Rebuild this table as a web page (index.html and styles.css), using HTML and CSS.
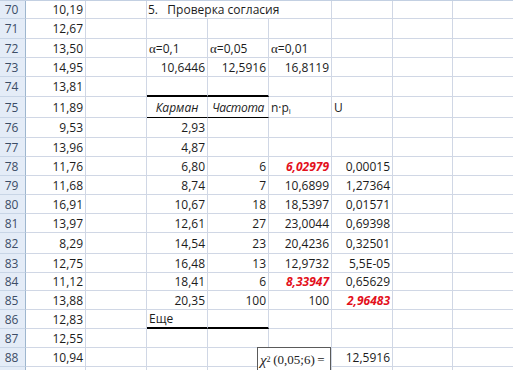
FILE: index.html
```html
<!DOCTYPE html>
<html>
<head>
<meta charset="utf-8">
<link rel="stylesheet" href="styles.css">
</head>
<body>
<div class="sheet">
  <div class="rh">70</div><div class="c r">10,19</div><div class="c"></div><div class="c span3 title">5.   Проверка согласия</div><div class="c"></div><div class="c"></div><div class="c"></div>
  <div class="rh">71</div><div class="c r">12,67</div><div class="c"></div><div class="c"></div><div class="c"></div><div class="c"></div><div class="c"></div><div class="c"></div><div class="c"></div>
  <div class="rh">72</div><div class="c r">13,50</div><div class="c"></div><div class="c"><span><span class="alpha">α</span>=0,1</span></div><div class="c"><span><span class="alpha">α</span>=0,05</span></div><div class="c"><span><span class="alpha">α</span>=0,01</span></div><div class="c"></div><div class="c"></div><div class="c"></div>
  <div class="rh">73</div><div class="c r">14,95</div><div class="c"></div><div class="c r">10,6446</div><div class="c r">12,5916</div><div class="c r">16,8119</div><div class="c"></div><div class="c"></div><div class="c"></div>
  <div class="rh">74</div><div class="c r">13,81</div><div class="c"></div><div class="c tb"></div><div class="c tb"></div><div class="c"></div><div class="c"></div><div class="c"></div><div class="c"></div>
  <div class="rh">75</div><div class="c r">11,89</div><div class="c"></div><div class="c ctr it hb">Карман</div><div class="c ctr it hb narrow">Частота</div><div class="c"><span>n·p<sub>i</sub></span></div><div class="c">U</div><div class="c"></div><div class="c"></div>
  <div class="rh">76</div><div class="c r">9,53</div><div class="c"></div><div class="c r">2,93</div><div class="c"></div><div class="c"></div><div class="c"></div><div class="c"></div><div class="c"></div>
  <div class="rh">77</div><div class="c r">13,96</div><div class="c"></div><div class="c r">4,87</div><div class="c"></div><div class="c"></div><div class="c"></div><div class="c"></div><div class="c"></div>
  <div class="rh">78</div><div class="c r">11,76</div><div class="c"></div><div class="c r">6,80</div><div class="c r">6</div><div class="c r red">6,02979</div><div class="c r">0,00015</div><div class="c"></div><div class="c"></div>
  <div class="rh">79</div><div class="c r">11,68</div><div class="c"></div><div class="c r">8,74</div><div class="c r">7</div><div class="c r">10,6899</div><div class="c r">1,27364</div><div class="c"></div><div class="c"></div>
  <div class="rh">80</div><div class="c r">16,91</div><div class="c"></div><div class="c r">10,67</div><div class="c r">18</div><div class="c r">18,5397</div><div class="c r">0,01571</div><div class="c"></div><div class="c"></div>
  <div class="rh">81</div><div class="c r">13,97</div><div class="c"></div><div class="c r">12,61</div><div class="c r">27</div><div class="c r">23,0044</div><div class="c r">0,69398</div><div class="c"></div><div class="c"></div>
  <div class="rh">82</div><div class="c r">8,29</div><div class="c"></div><div class="c r">14,54</div><div class="c r">23</div><div class="c r">20,4236</div><div class="c r">0,32501</div><div class="c"></div><div class="c"></div>
  <div class="rh">83</div><div class="c r">12,75</div><div class="c"></div><div class="c r">16,48</div><div class="c r">13</div><div class="c r">12,9732</div><div class="c r">5,5E-05</div><div class="c"></div><div class="c"></div>
  <div class="rh">84</div><div class="c r">11,12</div><div class="c"></div><div class="c r">18,41</div><div class="c r">6</div><div class="c r red">8,33947</div><div class="c r">0,65629</div><div class="c"></div><div class="c"></div>
  <div class="rh">85</div><div class="c r">13,88</div><div class="c"></div><div class="c r">20,35</div><div class="c r">100</div><div class="c r">100</div><div class="c r red">2,96483</div><div class="c"></div><div class="c"></div>
  <div class="rh">86</div><div class="c r">12,83</div><div class="c"></div><div class="c tb">Еще</div><div class="c tb"></div><div class="c"></div><div class="c"></div><div class="c"></div><div class="c"></div>
  <div class="rh">87</div><div class="c r">12,55</div><div class="c"></div><div class="c"></div><div class="c"></div><div class="c"></div><div class="c"></div><div class="c"></div><div class="c"></div>
  <div class="rh">88</div><div class="c r">10,94</div><div class="c"></div><div class="c"></div><div class="c"></div><div class="c"></div><div class="c r">12,5916</div><div class="c"></div><div class="c"></div>
  <div class="rh"></div><div class="c"></div><div class="c"></div><div class="c"></div><div class="c"></div><div class="c"></div><div class="c"></div><div class="c"></div><div class="c"></div>
  <div class="eq"><span class="chi">χ</span><sup>2</sup>&thinsp;(0,05;6)&thinsp;=</div>
</div>
</body>
</html>
```
FILE: styles.css
```css
html, body {
  margin: 0;
  padding: 0;
  background: #ffffff;
  overflow: hidden;
}
.sheet {
  position: relative;
  display: grid;
  grid-template-columns: 26px 60px 61px 61px 61px 63px 61px 60px 61px;
  grid-template-rows: 18px 20px 19px 19px 20px 21px 20px 19px 19px 19px 19px 19px 21px 19px 18px 19px 19px 19px 19px 19px;
  border-top: 1px solid #c3d0e2;
  width: 514px;
  font-family: "Open Sans", "Noto Sans", sans-serif;
  font-size: 12px;
  color: #1c1c1c;
}
.rh {
  box-sizing: border-box;
  background: #e4ecf7;
  border-right: 1px solid #9eb6ce;
  border-bottom: 1px solid #c8d5e6;
  color: #3c4d66;
  display: flex;
  align-items: center;
  justify-content: center;
  padding-right: 2px;
}
.c {
  box-sizing: border-box;
  border-right: 1px solid #d0d7e5;
  border-bottom: 1px solid #d0d7e5;
  padding: 0 2px;
  display: flex;
  align-items: center;
  white-space: pre;
  overflow: visible;
}
.r { justify-content: flex-end; }
.ctr { justify-content: center; }
.span3 { grid-column: span 3; }
.title { padding-left: 1px; }
.it { font-style: italic; }
.narrow { letter-spacing: -0.3px; padding: 0 1px; }
.red {
  color: #e3101c;
  font-weight: bold;
  font-style: italic;
}
.tb { border-bottom: 2px solid #000000; }
.hb { border-bottom: 1px solid #000000; }
.alpha {
  font-family: "Liberation Serif", "DejaVu Serif", serif;
  font-size: 13px;
}
sub {
  font-size: 8px;
  vertical-align: -2px;
  line-height: 0;
}
.eq {
  position: absolute;
  left: 257px;
  top: 346px;
  width: 74px;
  height: 26px;
  box-sizing: border-box;
  border: 1px solid #5a5a5a;
  background: #ffffff;
  font-family: "Liberation Serif", "DejaVu Serif", serif;
  font-size: 13px;
  color: #222222;
  display: flex;
  align-items: center;
  padding-left: 2px;
  white-space: nowrap;
}
.chi { font-style: italic; font-size: 15px; }
.eq sup {
  font-size: 8px;
  vertical-align: 5px;
  line-height: 0;
}
```
